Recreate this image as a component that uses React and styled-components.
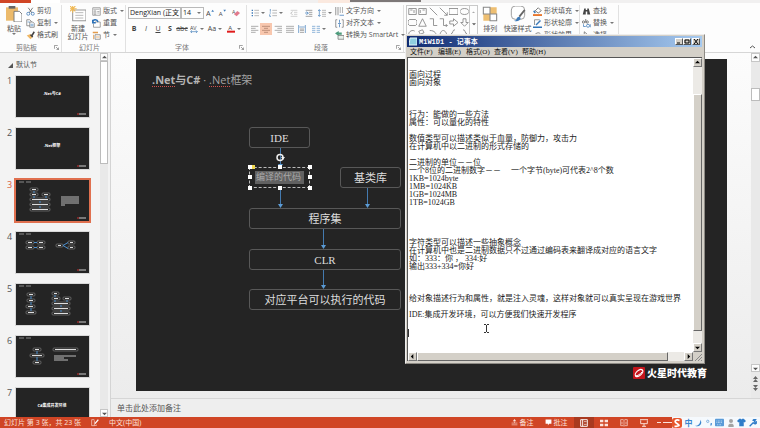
import styled, { createGlobalStyle, css } from "styled-components"

const GlobalStyle = createGlobalStyle`
  * { box-sizing: border-box; }
  body {
    margin: 0;
    overflow: hidden;
    font-family: "Open Sans", "Noto Sans CJK SC", sans-serif;
    font-size: 7px;
    line-height: 8px;
    color: #555;
  }
  button, select, input, textarea {
    font: inherit;
    color: inherit;
    margin: 0;
    padding: 0;
    border: none;
    border-radius: 0;
    background: none;
    appearance: none;
    outline: none;
  }
  svg { display: block; flex: none; }
`

const Page = styled.div`
  position: relative;
  height: 100vh;
  display: flex;
  flex-direction: column;
  background-color: #f3f3f3;
`

/* ---------- ribbon ---------- */

const TabStrip = styled.div`
  height: 3px;
  flex: none;
  display: flex;
  background-color: #f1f0f0;
`
const FileTab = styled.div`
  width: 31px;
  background-color: #d04525;
`
const OpenTab = styled.div`
  width: 29px;
  background-color: #fff;
`
const ToolTab = styled.div`
  width: 32px;
  margin-left: 258px;
  background-color: #fbe9df;
`
const DarkTab = styled.div`
  width: 71px;
  height: 2px;
  background-color: #7d7878;
`
const Ribbon = styled.header`
  height: 50px;
  flex: none;
  display: flex;
  padding-top: 2px;
  background-color: #fdfdfd;
  border-bottom: 1px solid #d6d6d6;
`
const Group = styled.section`
  width: ${(p) => p.$w}px;
  flex: none;
  display: flex;
  flex-direction: column;
  justify-content: space-between;
  border-right: 1px solid #e1e1e1;
`
const GroupBody = styled.div`
  height: 36px;
  display: flex;
  padding-left: 2px;
`
const GroupFoot = styled.div`
  height: 9px;
  display: flex;
  align-items: center;
  justify-content: center;
  position: relative;
  padding-right: 8px;
  color: #777;
`
const Launcher = styled.button`
  position: absolute;
  right: 2px;
  top: 2px;
  width: 5px;
  height: 5px;
`
const Spacer = styled.div`
  flex: 1;
`
const Collapse = styled.button`
  align-self: flex-end;
  width: 16px;
  height: 10px;
  display: grid;
  place-items: center;
`
const BigButton = styled.button`
  width: ${(p) => p.$w || 24}px;
  display: flex;
  flex-direction: column;
  align-items: center;
  padding-top: 1px;
  white-space: nowrap;
  svg { margin-bottom: 3px; }
`
const Stack = styled.div`
  display: flex;
  flex-direction: column;
`
const RowButton = styled.button`
  height: 12px;
  display: flex;
  align-items: center;
  gap: 2px;
  white-space: nowrap;
`
const Caret = styled.i`
  border: 2px solid transparent;
  border-top-color: #777;
  border-bottom: none;
  width: 4px;
  margin-left: ${(p) => p.$ml || 0}px;
`
const ToolRow = styled.div`
  height: 16px;
  display: flex;
  align-items: center;
`
const Tool = styled.button`
  width: ${(p) => p.$w || 12}px;
  height: 12px;
  display: flex;
  align-items: center;
  justify-content: center;
  gap: 2px;
  color: #444;
  ${(p) => p.$on && css`
    background-color: #f8c7ae;
  `}
`
const FontSelect = styled.select`
  width: ${(p) => p.$w}px;
  height: 12px;
  padding-left: 1px;
  font-size: 7px;
  line-height: 10px;
  color: #222;
  border: 1px solid #b9b9b9;
`
const Field = styled.label`
  display: flex;
  align-items: center;
  i { margin-left: -7px; margin-right: 3px; }
`
const Gallery = styled.div`
  width: 73px;
  height: 38px;
  display: flex;
  border: 1px solid #c9c9c9;
`
const Shapes = styled.div`
  flex: 1;
  display: grid;
  grid-template-columns: repeat(6, 1fr);
  grid-auto-rows: 11px;
  place-items: center;
`
const GalleryBar = styled.div`
  width: 8px;
  display: grid;
  grid-template-rows: repeat(3, 1fr);
  place-items: center;
  border-left: 1px solid #c9c9c9;
`

/* ---------- slide list ---------- */

const Body = styled.div`
  flex: 1;
  min-height: 0;
  display: grid;
  grid-template-columns: 111px 1fr;
`
const SlidePane = styled.nav`
  display: flex;
  justify-content: space-between;
  overflow: hidden;
  min-height: 0;
  padding-right: 2px;
  border-right: 1px solid #d4d4d4;
`
const SlideList = styled.div`
  padding-top: 8px;
`
const Section = styled.div`
  display: flex;
  align-items: center;
  gap: 3px;
  height: 8px;
  padding-left: 8px;
  margin-bottom: 7px;
`
const ThumbRow = styled.a`
  display: flex;
  height: 41px;
  margin-bottom: 11px;
  color: ${(p) => (p.$on ? "#d9603f" : "#555")};
  text-decoration: none;
  font-size: 9px;
  line-height: 9px;
  span { width: 16px; padding-left: 7px; }
  svg {
    background-color: #242424;
    outline: ${(p) => (p.$on ? "2px solid #e0704f" : "1px solid #d8d8d8")};
  }
`
const ScrollTrack = styled.div`
  width: ${(p) => p.$w || 8}px;
  flex: none;
  display: flex;
  flex-direction: column;
  background-color: #e9e9e9;
`
const ScrollButton = styled.button`
  height: ${(p) => p.$h || 8}px;
  display: grid;
  place-items: center;
  background-color: #fdfdfd;
  border: 1px solid #c6c6c6;
`
const ScrollThumb = styled.div`
  height: ${(p) => p.$h}px;
  margin-top: ${(p) => p.$mt || 0}px;
  background-color: #fff;
  border: 1px solid #bcbcbc;
`

/* ---------- slide ---------- */

const Work = styled.main`
  display: flex;
  flex-direction: column;
  min-width: 0;
`
const Stage = styled.div`
  flex: 1;
  display: flex;
  background: linear-gradient(#fcfcfc, #ececec);
`
const Slide = styled.article`
  position: relative;
  flex: 1;
  margin: 6px 24px 7px 25px;
  background-color: #242424;
`
const SlideTitle = styled.h1`
  margin: 14px 0 0 16px;
  font-size: 11px;
  line-height: 13px;
  font-weight: 400;
  color: #a3a3a3;
  b { color: #b4b4b4; }
  u {
    text-decoration: underline dotted #d0504d 1px;
    text-underline-offset: 2px;
    text-decoration-skip-ink: none;
  }
`
const Node = styled.div`
  position: absolute;
  left: ${(p) => p.$x}px;
  top: ${(p) => p.$y}px;
  width: ${(p) => p.$w || 61}px;
  height: 21px;
  display: grid;
  place-items: center;
  border: 1px solid #585858;
  border-radius: 3px;
  font-family: "Liberation Serif", "Noto Sans CJK SC", serif;
  font-size: 11px;
  line-height: 13px;
  color: #ddd;
  padding-top: 2px;
  ${(p) => p.$selected && css`
    border: 1px dashed #bbb;
    border-radius: 0;
    font-size: 9px;
    color: #aaa;
    padding: 0;
  `}
`
const Marked = styled.span`
  padding: 0 3px 0 1px;
  background-color: #616161;
`
const Links = styled.svg`
  position: absolute;
  left: 0;
  top: 0;
`
const Brand = styled.div`
  position: absolute;
  right: 20px;
  bottom: 12px;
  display: flex;
  align-items: center;
  gap: 2px;
  color: #fff;
  font-family: "Noto Sans CJK SC", sans-serif;
  font-size: 10px;
  line-height: 12px;
  font-weight: 900;
`
const Notes = styled.textarea`
  height: 19px;
  padding: 4px 6px;
  resize: none;
  overflow: hidden;
  font-size: 8px;
  line-height: 10px;
  background-color: #eee;
  border-top: 1px solid #d6d6d6;
  &::placeholder { color: #555; }
`

/* ---------- status bar ---------- */

const StatusBar = styled.footer`
  height: 11px;
  flex: none;
  display: flex;
  align-items: center;
  padding-left: 4px;
  color: #fbe3dc;
  background-color: #d04525;
`
const StatusButton = styled.button`
  height: 11px;
  width: ${(p) => p.$w || 20}px;
  display: flex;
  align-items: center;
  justify-content: center;
  gap: 2px;
  background-color: ${(p) => (p.$on ? "#a93a20" : "transparent")};
`
const Zoom = styled.div`
  width: 18px;
  display: flex;
  align-items: center;
  gap: 2px;
  padding-left: 3px;
`
const Ime = styled.div`
  width: 88px;
  height: 11px;
  display: flex;
  align-items: center;
  justify-content: space-between;
  padding: 0 3px 0 0;
  color: #3b86cf;
  font-size: 8px;
  font-weight: 700;
  background-color: #f5f9fd;
`

/* ---------- notepad ---------- */

const Window = styled.section`
  position: absolute;
  left: 405px;
  top: 34px;
  width: 300px;
  height: 330px;
  display: flex;
  flex-direction: column;
  padding: 1px 2px 2px 1px;
  background-color: #d4d0c8;
  border: 1px solid #8d8a84;
  border-top-color: #eee;
  border-left-color: #eee;
`
const TitleBar = styled.div`
  height: 11px;
  flex: none;
  display: flex;
  align-items: center;
  gap: 2px;
  padding: 0 2px;
  color: #fff;
  font-family: "Liberation Mono", "Noto Sans CJK SC", monospace;
  font-weight: 700;
  background: linear-gradient(90deg, #0e2a72, #a6caf0);
`
const WinButtons = styled.div`
  display: flex;
`
const WinButton = styled.button`
  width: 8px;
  height: 7px;
  margin-left: ${(p) => p.$ml || 0}px;
  display: grid;
  place-items: center;
  background-color: #d4d0c8;
  border: 1px solid #555;
  border-top-color: #fff;
  border-left-color: #fff;
`
const MenuBar = styled.div`
  height: 10px;
  flex: none;
  display: flex;
  align-items: center;
  padding-left: 3px;
  button {
    width: 28px;
    text-align: left;
    color: #111;
    font-family: "Liberation Serif", "Noto Sans CJK SC", serif;
  }
`
const Editor = styled.div`
  flex: 1;
  min-height: 0;
  display: grid;
  grid-template-columns: 1fr 9px;
  grid-template-rows: 1fr 9px;
  border-top: 1px solid #555;
  border-left: 1px solid #555;
`
const Doc = styled.textarea`
  padding: 13px 0 0 1px;
  resize: none;
  overflow: hidden;
  background-color: #fff;
  color: #222;
  font-family: "Liberation Serif", "Noto Sans CJK SC", serif;
  font-size: 8px;
  line-height: 8px;
`
const Bar = styled.div`
  display: flex;
  flex-direction: ${(p) => (p.$row ? "row" : "column")};
  background-color: #eceae6;
`
const BarButton = styled.button`
  width: 9px;
  height: 9px;
  flex: none;
  display: grid;
  place-items: center;
  background-color: #d4d0c8;
  border: 1px solid #777;
  border-top-color: #fff;
  border-left-color: #fff;
`
const BarThumb = styled.div`
  flex: none;
  width: ${(p) => p.$w || 9}px;
  height: ${(p) => p.$h || 9}px;
  margin-top: ${(p) => p.$mt || 0}px;
  background-color: #d4d0c8;
  border: 1px solid #666;
  border-top-color: #fff;
  border-left-color: #fff;
`
const Pointer = styled.svg`
  position: absolute;
  left: 78px;
  top: 289px;
`
const TextCaret = styled.i`
  position: absolute;
  left: 2px;
  top: 294px;
  width: 1px;
  height: 8px;
  background-color: #333;
`

const docText = `面向过程
面向对象



行为：能做的一些方法
属性：可以量化的特性

数值类型可以描述类似于血量，防御力，攻击力
在计算机中以二进制的形式存储的

二进制的单位－－位
一个8位的二进制数字－－　 一个字节(byte)可代表2^8个数
1KB=1024byte
1MB=1024KB
1GB=1024MB
1TB=1024GB




字符类型可以描述一些抽象概念
在计算机中也是二进制数据只不过通过编码表来翻译成对应的语言文字
如：333：你 ， 334:好
输出333+334=你好



给对象描述行为和属性，就是注入灵魂，这样对象就可以真实呈现在游戏世界

IDE:集成开发环境，可以方便我们快速开发程序

`

// icon drawings, all on a 12 x 12 grid
const icons = {
  cut: <><path d="M3 1l5 7M9 1L4 8" stroke="#555" /><circle cx="3" cy="9" r="2" stroke="#3d7ab8" /><circle cx="9" cy="9" r="2" stroke="#3d7ab8" /></>,
  copy: <><path d="M1 1h4l2 2v6H1z" stroke="#777" fill="#fff" /><path d="M5 4h4l2 2v5H5z" stroke="#777" fill="#fff" /><path d="M6 7h4M6 9h4M2 4h3" stroke="#5a93c8" /></>,
  brush: <><path d="M1 6l5-2 3 4-3 3z" fill="#efb765" /><path d="M6 5l3 3M8 6l3-5" stroke="#444" strokeWidth="2" /></>,
  layout: <><path d="M1 1h10v10H1z" stroke="#888" fill="#fff" /><path d="M2 3h8M3 5h2v5H3zM7 6h3M7 8h3" stroke="#999" /></>,
  reset: <><path d="M4 4h7v7H2V6" stroke="#888" fill="#fff" /><path d="M1 5c0-5 6-5 7-1M1 1v4h4" stroke="#2f73b8" strokeWidth="2" /></>,
  section: <><path d="M1 2h7" stroke="#e39b49" strokeWidth="2" /><path d="M4 5h7v6H4z" stroke="#777" fill="#fff" /><path d="M2 5v6M5 8h5" stroke="#e39b49" /></>,
  grow: <><text x="0" y="11" fontSize="11" fill="#444">A</text><path d="M8 4l2-3 2 3z" fill="#3d7ab8" /></>,
  shrink: <><text x="1" y="11" fontSize="9" fill="#444">A</text><path d="M8 1h4l-2 3z" fill="#3d7ab8" /></>,
  eraser: <><text x="0" y="7" fontSize="8" fill="#555">A</text><path d="M3 8l5-5 4 3-5 5z" fill="#e27a8d" /></>,
  spacing: <><text x="0" y="7" fontSize="8" fill="#444">AV</text><path d="M1 10h10M3 8l-2 2 2 2M9 8l2 2-2 2" stroke="#3d7ab8" /></>,
  color: <><text x="2" y="8" fontSize="9" fill="#444">A</text><path d="M0 10h12" stroke="#e01b1b" strokeWidth="3" /></>,
  bullets: <><path d="M1 2h2M1 6h2M1 10h2" stroke="#3d7ab8" strokeWidth="2" /><path d="M5 2h7M5 6h7M5 10h7" stroke="#999" /></>,
  numbers: <><path d="M2 0v4M1 6h2M1 8v3h2" stroke="#3d7ab8" /><path d="M5 2h7M5 6h7M5 10h7" stroke="#999" /></>,
  outdent: <><path d="M1 2h10M6 5h5M6 8h5M1 11h10" stroke="#bbb" /><path d="M4 4L1 6l3 3" stroke="#aaa" /></>,
  indent: <><path d="M1 2h10M6 5h5M6 8h5M1 11h10" stroke="#777" /><path d="M0 6h5M2 4l3 2-3 3" stroke="#3d7ab8" /></>,
  line: <><path d="M2 1v10M0 3l2-2 2 2M0 9l2 2 2-2" stroke="#3d7ab8" /><path d="M6 2h6M6 5h6M6 8h6M6 11h6" stroke="#999" /></>,
  left: <path d="M0 2h11M0 5h7M0 8h11M0 11h7" stroke="#888" />,
  center: <path d="M0 2h12M3 5h6M0 8h12M3 11h6" stroke="#a07562" />,
  right: <path d="M1 2h11M5 5h7M1 8h11M5 11h7" stroke="#888" />,
  justify: <path d="M0 2h12M0 5h12M0 8h12M0 11h12" stroke="#888" />,
  spread: <><path d="M1 0v12M11 0v12M2 3h8" stroke="#3d7ab8" /><path d="M3 6h6M3 8h6M3 11h6" stroke="#777" /></>,
  columns: <path d="M0 2h5M7 2h5M0 5h5M7 5h5M0 8h5M7 8h5M0 11h5M7 11h5" stroke="#5a93c8" />,
  direction: <><path d="M1 0v11M4 0v11" stroke="#777" /><path d="M7 0v8M10 0v8" stroke="#999" /><path d="M6 11h6" stroke="#3d7ab8" /></>,
  alignText: <><path d="M3 1H1v10h2M9 1h2v10H9" stroke="#777" /><path d="M6 1v4M6 11V7M4 6h4" stroke="#3d7ab8" /></>,
  smart: <><path d="M0 3l5-3v2h4v3H5v2z" fill="#4c9b7b" /><path d="M4 6h8v5H4z" stroke="#777" fill="#e6efe9" /></>,
  fill: <><path d="M3 5l4-4 4 4-4 3z" stroke="#555" fill="#fff" /><path d="M1 5l2 3" stroke="#3d7ab8" strokeWidth="2" /><path d="M0 11h12" stroke="#e8762c" strokeWidth="3" /></>,
  outline: <><path d="M2 1h7M2 1v7" stroke="#777" /><path d="M4 8l6-6" stroke="#3d7ab8" strokeWidth="2" /><path d="M0 11h12" stroke="#2f73b8" strokeWidth="2" /></>,
  effect: <><path d="M2 10c-3-6 8-12 9-3" stroke="#666" /><path d="M4 9h7v3H4z" fill="#8aaed0" /></>,
  find: <><path d="M1 10l2-8h2v8zM7 10V2h2l2 8z" fill="#444" /><path d="M4 5h4" stroke="#444" strokeWidth="2" /></>,
  replace: <><path d="M5 0v5" stroke="#555" /><circle cx="7" cy="4" r="1.500" stroke="#555" /><circle cx="2" cy="4" r="1.500" stroke="#555" /><circle cx="8" cy="9" r="2" stroke="#3d7ab8" /><path d="M2 7v3h3M11 7v4" stroke="#3d7ab8" /></>,
  select: <path d="M3 1v9l3-3h4z" stroke="#666" fill="#fff" />,
  paste: <><path d="M0 1h9v10H0z" fill="#ecba6b" /><path d="M2 0h5v2H2z" fill="#666" /><path d="M6 4h4l2 2v6H6z" stroke="#777" strokeWidth=".7" fill="#fff" /></>,
  newSlide: <><path d="M2 3h10v8H2z" stroke="#999" strokeWidth=".8" fill="#fff" /><path d="M4 5h6M4 7h6M4 9h6" stroke="#b5b5b5" strokeWidth=".7" /><path d="M2 0v5M0 2h5M0 0l4 4M4 0L0 4" stroke="#f0b955" strokeWidth=".8" /></>,
  arrange: <><path d="M6 1h5v5H6zM1 6h5v5H1z" fill="#eebf72" /><path d="M1 1h5v5H1zM6 6h5v5H6z" stroke="#888" strokeWidth=".8" fill="#fff" /></>,
  style: <><rect x="1" y="0" width="10" height="10" rx="3" stroke="#888" strokeWidth=".6" fill="#fff" /><path d="M11 3L7 8" stroke="#666" strokeWidth="1.4" /><path d="M3 11c3 0 1-3 4-3l1 1c0 2-3 3-5 2z" fill="#3d7ab8" /></>,
  note: <><path d="M6 0l3 4H3z" fill="#fbe3dc" /><path d="M1 7h10M1 10h10M6 4v3" stroke="#fbe3dc" /></>,
  comment: <path d="M1 1h10v7H7l-2 3V8H1z" fill="#fff" />,
  normal: <><path d="M1 1h10v10H1zM4 1v10" stroke="#fff" strokeWidth="1.4" /><path d="M6 4h4M6 8h4" stroke="#fff" /></>,
  sorter: <path d="M0 1h5v4H0zM7 1h5v4H7zM0 7h5v4H0zM7 7h5v4H7z" fill="#fbe3dc" />,
  book: <path d="M1 1h4l1 1 1-1h4v9H7l-1 1-1-1H1zM6 2v8M3 4v4M9 4v4" stroke="#fbe3dc" />,
  show: <><path d="M0 1h12M1 2v5h10V2M6 7v4M3 11h6" stroke="#fbe3dc" strokeWidth="1.4" /></>,
  spell: <><path d="M5 1H1v9h4M5 2v8l4-1" stroke="#fbe3dc" /><path d="M6 7l5-6" stroke="#fff" strokeWidth="2" /></>,
  sogou: <><rect width="12" height="12" rx="3" fill="#e8562c" /><path d="M9 3C5 1 2 4 5 6s6 3 0 4H3" stroke="#fff" strokeWidth="2" /></>,
  moon: <path d="M8 1c4 6-1 12-8 9 5 0 8-3 8-9z" fill="#3b86cf" />,
  dots: <><circle cx="3" cy="4" r="2" stroke="#3b86cf" /><path d="M9 7v2l-1 2" stroke="#3b86cf" strokeWidth="2" /></>,
  keyboard: <><rect x="0" y="1" width="12" height="10" rx="1" fill="#5a9bd8" /><path d="M2 4h8M2 6h8M3 9h6" stroke="#e6f1fb" strokeDasharray="1 1" /></>,
  person: <><circle cx="6" cy="3" r="3" fill="#a3a3a3" /><path d="M2 12V9l2-2h4l2 2v3z" fill="#a3a3a3" /></>,
  shirt: <path d="M3 1h2l1 1 1-1h2l3 3-2 2-1-1v6H3V5L2 6 0 4z" fill="#2f7cc9" />,
  wrench: <path d="M1 11l6-6M6 3c0-2 2-3 4-2L8 3l1 2 3-1c0 3-3 4-5 2" stroke="#2f7cc9" strokeWidth="2" />,
  launcher: <path d="M1 9V1h8M5 5l6 6M11 6v5H6" stroke="#888" strokeWidth="2" />,
}

const Icon = ({ name, size = 9 }) => (
  <svg width={size} height={size} viewBox="0 0 12 12" fill="none" aria-hidden="true">{icons[name]}</svg>
)

const paths = {
  up: "M0 4l3-3 3 3z",
  down: "M0 2h6L3 5z",
  left: "M4 0v6L1 3z",
  right: "M2 0v6l3-3z",
}
const Arrow = ({ dir, size = 5, color = "#555" }) => (
  <svg width={size} height={size} viewBox="0 0 6 6" aria-hidden="true"><path d={paths[dir]} fill={color} /></svg>
)

const shapes = [
  "M1 2h10v8H1zM3 4h3M8 4v4", "M1 2h10v8H1zM3 4v4M6 4h3", "M1 1l10 10", "M1 1l10 10M11 7v4H7", "M0 2h12v8H0z", "M6 2c8 0 8 8 0 8s-8-8 0-8z",
  "M2 2h8l2 2v4l-2 2H2L0 8V4z", "M6 1l5 10H1z", "M1 1h5v9h5", "M1 1h5v9h5M9 8l2 2-2 2", "M1 4h5V1l6 5-6 5V8H1z", "M4 1h4v5h3l-5 5-5-5h3z",
  "M2 11C-2 4 6 0 9 3M4 7l6 3", "M1 3l5-2 2 4-5 2zM5 7l6 4", "M1 2c7 0 9 4 9 9", "M1 11c0-12 9-12 10 0", "M8 1c-4 0-2 5-5 5 3 0 1 5 5 5", "M4 1c4 0 2 5 5 5-3 0-1 5-5 5",
]

const box = (x, y, w) => <g key={`${x}-${y}`}><rect x={x} y={y} width={w} height="3" rx="1" stroke="#888" strokeWidth=".6" /><path d={`M${x + 2} ${y + 1.5}h${w - 4}`} stroke="#ddd" /></g>
const thumbs = [
  { title: ".Net与C#" },
  { title: ".Net框架" },
  { boxes: [[14, 8, 8], [14, 13, 8], [26, 13, 8], [14, 18, 20], [14, 23, 20], [14, 28, 20]], links: "M18 11v2M18 16v2M30 16v2M24 21v2M24 26v2", text: "M45 17h18M45 19h18M45 21h18M45 23h18M45 25h4" },
  { boxes: [[10, 9, 8], [21, 9, 8], [10, 14, 8], [21, 14, 8], [40, 12, 7], [52, 9, 7], [52, 14, 7]], links: "M18 10.500h3M18 15.500h3M47 13.500l5-3M47 13.500l5 3" },
  { boxes: [[11, 9, 8], [11, 15, 8], [10, 21, 9], [10, 27, 10], [36, 8, 7], [36, 13, 8], [47, 13, 8], [36, 18, 18], [36, 23, 18], [36, 28, 18]], links: "M15 12v3M15 18v3M15 24v3M39 11v2M39 16v2M51 16v2M45 21v2M45 26v2" },
  { boxes: [[17, 12, 8], [14, 18, 14], [17, 25, 8], [37, 12, 25]], links: "M21 15v3M21 21v4", text: "M38 20h22M38 22h10M38 24h14" },
  { title: "C#集成开发环境" },
]

const Thumb = ({ title, boxes = [], links, text }) => (
  <svg width="73" height="41" viewBox="0 0 73 41" fill="none">
    {title
      ? <text x="36" y="19" fontSize="4" fontWeight="700" textAnchor="middle" fill="#fff">{title}</text>
      : <path d="M3 2h5M10 2h5" stroke="#888" />}
    {boxes.map((b) => box(...b))}
    {links && <path d={links} stroke="#4a90d0" />}
    {text && <path d={text} stroke="#bbb" />}
    <path d="M61 38h2" stroke="#d03030" /><path d="M63 38h7" stroke="#ccc" />
  </svg>
)

const Row = ({ icon, children, caret }) => (
  <RowButton><Icon name={icon} />{children}{caret && <Caret $ml={1} />}</RowButton>
)

const Foot = ({ children, launcher }) => (
  <GroupFoot>
    {children}
    {launcher && <Launcher aria-label={children}><Icon name="launcher" size={5} /></Launcher>}
  </GroupFoot>
)

const RibbonBar = () => (
  <Ribbon>
    <Group $w={62}>
      <GroupBody>
        <BigButton $w={24}><Icon name="paste" size={16} />粘贴<Caret /></BigButton>
        <Stack>
          <Row icon="cut">剪切</Row>
          <Row icon="copy" caret>复制</Row>
          <Row icon="brush">格式刷</Row>
        </Stack>
      </GroupBody>
      <Foot launcher>剪贴板</Foot>
    </Group>
    <Group $w={64}>
      <GroupBody>
        <BigButton $w={28}><Icon name="newSlide" size={16} />新建<br />幻灯片</BigButton>
        <Stack>
          <Row icon="layout" caret>版式</Row>
          <Row icon="reset">重置</Row>
          <Row icon="section" caret>节</Row>
        </Stack>
      </GroupBody>
      <Foot>幻灯片</Foot>
    </Group>
    <Group $w={121}>
      <GroupBody>
        <Stack>
          <ToolRow>
            <Field><FontSelect $w={53} aria-label="字体"><option>DengXian (正文</option></FontSelect><Caret /></Field>
            <Field><FontSelect $w={23} aria-label="字号"><option>14</option></FontSelect><Caret /></Field>
            <Tool><Icon name="grow" size={8} /></Tool>
            <Tool><Icon name="shrink" size={8} /></Tool>
            <Tool $w={16}><Icon name="eraser" size={8} /></Tool>
          </ToolRow>
          <ToolRow>
            <Tool><b>B</b></Tool>
            <Tool><i>I</i></Tool>
            <Tool><u>U</u></Tool>
            <Tool><b>S</b></Tool>
            <Tool><s>abc</s></Tool>
            <Tool $w={18}><Icon name="spacing" size={8} /><Caret /></Tool>
            <Tool $w={18}>Aa<Caret /></Tool>
            <Tool $w={20}><Icon name="color" size={8} /><Caret /></Tool>
          </ToolRow>
        </Stack>
      </GroupBody>
      <Foot launcher>字体</Foot>
    </Group>
    <Group $w={157}>
      <GroupBody>
        <Stack>
          <ToolRow>
            <Tool $w={18}><Icon name="bullets" size={8} /><Caret /></Tool>
            <Tool $w={18}><Icon name="numbers" size={8} /><Caret /></Tool>
            <Tool $w={18}><Icon name="outdent" size={8} /></Tool>
            <Tool><Icon name="indent" size={8} /></Tool>
            <Tool $w={20}><Icon name="line" size={8} /><Caret /></Tool>
          </ToolRow>
          <ToolRow>
            <Tool $w={11}><Icon name="left" size={8} /></Tool>
            <Tool $on><Icon name="center" size={8} /></Tool>
            <Tool><Icon name="right" size={8} /></Tool>
            <Tool><Icon name="justify" size={8} /></Tool>
            <Tool><Icon name="spread" size={8} /></Tool>
            <Tool $w={22}><Icon name="columns" size={8} /><Caret /></Tool>
          </ToolRow>
        </Stack>
        <Stack>
          <Row icon="direction" caret>文字方向</Row>
          <Row icon="alignText" caret>对齐文本</Row>
          <Row icon="smart" caret>转换为 SmartArt</Row>
        </Stack>
      </GroupBody>
      <Foot launcher>段落</Foot>
    </Group>
    <Group $w={176}>
      <GroupBody>
        <Gallery>
          <Shapes>
            {shapes.map((d) => (
              <svg key={d} width="9" height="9" viewBox="0 0 12 12" fill="none"><path d={d} stroke="#777" /></svg>
            ))}
          </Shapes>
          <GalleryBar>
            <Arrow dir="up" size={3} color="#aaa" />
            <Arrow dir="down" size={4} />
            <Arrow dir="down" size={4} />
          </GalleryBar>
        </Gallery>
        <BigButton $w={24}><Icon name="arrange" size={16} />排列</BigButton>
        <BigButton $w={31}><Icon name="style" size={16} />快速样式</BigButton>
        <Stack>
          <Row icon="fill" caret>形状填充</Row>
          <Row icon="outline" caret>形状轮廓</Row>
          <Row icon="effect" caret>形状效果</Row>
        </Stack>
      </GroupBody>
    </Group>
    <Group $w={39}>
      <GroupBody>
        <Stack>
          <Row icon="find">查找</Row>
          <Row icon="replace" caret>替换</Row>
          <Row icon="select" caret>选择</Row>
        </Stack>
      </GroupBody>
    </Group>
    <Spacer />
    <Collapse aria-label="折叠功能区">
      <svg width="5" height="4" viewBox="0 0 5 4" fill="none"><path d="M0 3l2.500-2L5 3" stroke="#555" /></svg>
    </Collapse>
  </Ribbon>
)

const handles = [[114, 108], [144, 108], [174, 108], [114, 118], [174, 118], [114, 129], [144, 129], [174, 129]]

const SlideView = () => (
  <Slide>
    <SlideTitle><b><u>.Net</u>与C#</b> · <u>.Net</u>框架</SlideTitle>
    <Node $x={113} $y={68}>IDE</Node>
    <Node $x={113} $y={108} $selected><Marked>编译的代码</Marked></Node>
    <Node $x={204} $y={108}>基类库</Node>
    <Node $x={113} $y={149} $w={152}>程序集</Node>
    <Node $x={113} $y={190} $w={152}>CLR</Node>
    <Node $x={113} $y={230} $w={152}>对应平台可以执行的代码</Node>
    <Links width="280" height="260" fill="none">
      <path d="M144.500 89v17M144.500 129v17M231.500 129v17M187.500 170v17M187.500 211v17" stroke="#447aaf" />
      <path d="M142 105h5l-2.500 4zM142 145h5l-2.500 4zM229 145h5l-2.500 4zM185 186h5l-2.500 4zM185 226h5l-2.500 4z" fill="#5b9bd5" />
      <circle cx="144" cy="98.500" r="3" stroke="#eee" strokeWidth="1.500" />
      <path d="M145 98h4l-2 3z" fill="#eee" />
      {handles.map(([x, y]) => <rect key={`${x}-${y}`} x={x - 2} y={y - 2} width="4" height="4" fill="#fff" />)}
      <rect x="116" y="106" width="3" height="4" fill="#f0d850" />
    </Links>
    <Brand>
      <svg width="12" height="12" viewBox="0 0 12 12" fill="none">
        <rect width="12" height="12" rx="1" fill="#c4161c" />
        <ellipse cx="6" cy="6" rx="4.500" ry="2.500" transform="rotate(-42 6 6)" stroke="#fff" strokeWidth="1.200" />
        <path d="M2 9c3 0 5-2 7-4" stroke="#fff" />
      </svg>
      火星时代教育
    </Brand>
  </Slide>
)

const Notepad = () => (
  <Window>
    <TitleBar>
      <svg width="8" height="9" viewBox="0 0 8 9"><path d="M1 1h7v7H0z" fill="#8fd0e0" stroke="#dff4fa" /></svg>
      M1W1D1 - 记事本
      <Spacer />
      <WinButtons>
        <WinButton aria-label="最小化"><svg width="6" height="5"><path d="M1 4h3" stroke="#000" /></svg></WinButton>
        <WinButton aria-label="最大化"><svg width="6" height="5" fill="none"><path d="M1 1h4v3H1z" stroke="#000" /></svg></WinButton>
        <WinButton aria-label="关闭" $ml={1}><svg width="6" height="5"><path d="M1 0l4 5M5 0L1 5" stroke="#000" /></svg></WinButton>
      </WinButtons>
    </TitleBar>
    <MenuBar>
      <button>文件(F)</button>
      <button>编辑(E)</button>
      <button>格式(O)</button>
      <button>查看(V)</button>
      <button>帮助(H)</button>
    </MenuBar>
    <Editor>
      <Doc aria-label="记事本" wrap="off" spellCheck={false} defaultValue={docText} />
      <Bar>
        <BarButton aria-label="向上"><Arrow dir="up" color="#000" /></BarButton>
        <BarThumb $h={237} $mt={27} />
        <Spacer />
        <BarButton aria-label="向下"><Arrow dir="down" color="#000" /></BarButton>
      </Bar>
      <Bar $row>
        <BarButton aria-label="向左"><Arrow dir="left" color="#000" /></BarButton>
        <BarThumb $w={251} />
        <Spacer />
        <BarButton aria-label="向右"><Arrow dir="right" color="#000" /></BarButton>
      </Bar>
      <svg width="9" height="9" viewBox="0 0 9 9"><path d="M2 9l7-7M5 9l4-4M8 9l1-1" stroke="#888" /></svg>
    </Editor>
    <TextCaret />
    <Pointer width="5" height="9" viewBox="0 0 5 9" fill="none"><path d="M0 .5h2M3 .5h2M2.500 1v7M0 8.500h2M3 8.500h2" stroke="#333" /></Pointer>
  </Window>
)

const App = () => {
  return (
    <Page>
      <GlobalStyle />
      <TabStrip><FileTab /><OpenTab /><ToolTab /><DarkTab /></TabStrip>
      <RibbonBar />
      <Body>
        <SlidePane>
          <SlideList>
            <Section>
              <svg width="5" height="5"><path d="M5 0v5H0z" fill="#555" /></svg>
              默认节
            </Section>
            {thumbs.map((t, i) => (
              <ThumbRow key={i} href={`#slide-${i + 1}`} $on={i === 2}>
                <span>{i + 1}</span>
                <Thumb {...t} />
              </ThumbRow>
            ))}
          </SlideList>
          <ScrollTrack>
            <ScrollButton aria-label="向上"><Arrow dir="up" /></ScrollButton>
            <ScrollThumb $h={103} />
            <Spacer />
            <ScrollButton aria-label="向下"><Arrow dir="down" /></ScrollButton>
          </ScrollTrack>
        </SlidePane>
        <Work>
          <Stage>
            <SlideView />
            <ScrollTrack $w={9}>
              <ScrollButton $h={9} aria-label="上一页"><Arrow dir="up" /></ScrollButton>
              <ScrollThumb $h={13} $mt={26} />
              <Spacer />
              <ScrollButton $h={8} aria-label="下一页"><Arrow dir="down" /></ScrollButton>
              <svg width="9" height="26" viewBox="0 0 9 26">
                <path d="M2 7l2.500-3L7 7zM2 10l2.500-3L7 10zM2 13h5l-2.500 3zM2 16h5l-2.500 3z" fill="#666" />
              </svg>
            </ScrollTrack>
          </Stage>
          <Notes aria-label="备注" placeholder="单击此处添加备注" />
        </Work>
      </Body>
      <StatusBar>
        幻灯片 第 3 张，共 23 张
        <StatusButton $w={28} aria-label="拼写检查"><Icon name="spell" size={8} /></StatusButton>
        中文(中国)
        <Spacer />
        <StatusButton $w={32}><Icon name="note" size={7} />备注</StatusButton>
        <StatusButton $w={36}><Icon name="comment" size={7} />批注</StatusButton>
        <StatusButton $on aria-label="普通视图"><Icon name="normal" size={8} /></StatusButton>
        <StatusButton aria-label="幻灯片浏览"><Icon name="sorter" size={8} /></StatusButton>
        <StatusButton aria-label="阅读视图"><Icon name="book" size={8} /></StatusButton>
        <StatusButton aria-label="幻灯片放映"><Icon name="show" size={8} /></StatusButton>
        <Zoom><svg width="15" height="3"><path d="M0 1.500h4M6 1.500h9" stroke="#fbe3dc" /></svg></Zoom>
        <Ime>
          <Icon name="sogou" size={10} />
          中
          <Icon name="moon" size={8} />
          <Icon name="dots" size={7} />
          <Icon name="keyboard" size={9} />
          <Icon name="person" size={8} />
          <Icon name="shirt" size={9} />
          <Icon name="wrench" size={8} />
        </Ime>
      </StatusBar>
      <Notepad />
    </Page>
  )
}

export default App
